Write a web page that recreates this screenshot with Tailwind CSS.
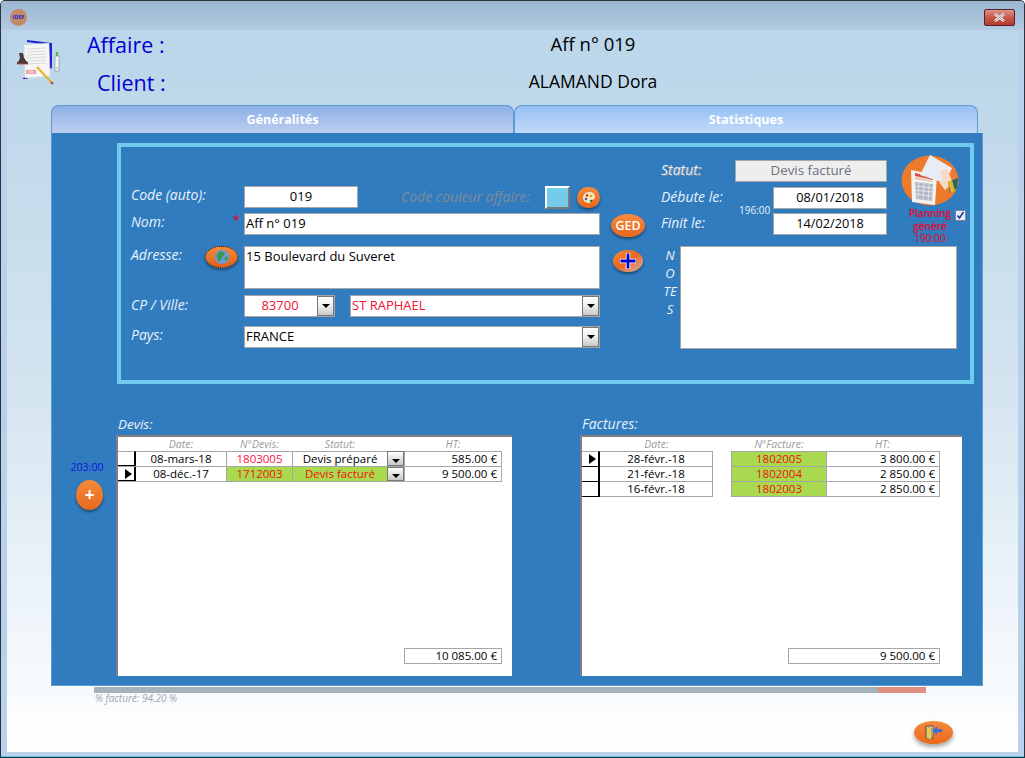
<!DOCTYPE html>
<html lang="fr">
<head>
    <meta charset="UTF-8">
    <title>Affaire</title>
    <script src="https://cdn.jsdelivr.net/npm/@tailwindcss/browser@4"></script>
</head>
<body class="bg-white">

<div class="relative w-[1025px] h-[758px] overflow-hidden flex flex-col font-['Open_Sans',sans-serif] bg-[#b9d1ea] border-t border-x border-[#2a333d] rounded-t-[5px]">

    <!-- Title bar -->
    <div class="h-[29px] shrink-0 flex items-center justify-between pl-[9px] pr-[9px] pt-[4px] bg-gradient-to-b from-[#9cb5d0] to-[#b2cbe1]">
        <div class="w-[17px] h-[17px] rounded-full bg-[#c08a64] flex items-center justify-center text-[5px] leading-none font-bold text-[#1a1ae0]">IDEP</div>
        <div class="w-[31px] h-[17px] rounded-[2px] border border-[#5a2030] bg-gradient-to-b from-[#dc9488] via-[#c8594a] to-[#b53a2a] flex items-center justify-center">
            <svg width="13" height="9" viewBox="0 0 13 9"><path d="M2 1l9 7M11 1L2 8" stroke="#ffffff" stroke-width="2.6" fill="none"/><path d="M2 1l9 7M11 1L2 8" stroke="#666f7a" stroke-width="0.8" fill="none"/></svg>
        </div>
    </div>

    <!-- Client area -->
    <div class="relative flex-1 mx-[6px] mb-[6px] flex flex-col bg-[linear-gradient(to_bottom,#bbd6ea_0%,#c0d9ea_14%,#d5e5f0_51%,#f3f8fc_86%,#ffffff_100%)]">

        <!-- Header -->
        <div class="h-[75px] shrink-0 flex">
            <div class="w-[45px] pl-[7px] pt-[9px] shrink-0">
                <svg width="46" height="50" viewBox="0 0 46 50">
                    <path d="M13 1l16 2 9 1v25l-3 1V6L13 3z" fill="#2222cc"/>
                    <path d="M9 39l3-1 2 2-5 0z" fill="#2222cc"/>
                    <path d="M10 6l25-2 1 33-25 2z" fill="#f5f5f5" stroke="#d8d8d8" stroke-width="0.5"/>
                    <path d="M13 10l19-1M13 13l19-1M13 16l19-1M13 19l19-1M13 22l19-1M13 25l19-1" stroke="#d4d4d4" stroke-width="0.8"/>
                    <rect x="12" y="31" width="10" height="4" fill="#f29aa6"/>
                    <path d="M14 33h6" stroke="#ffffff" stroke-width="0.8"/>
                    <path d="M23 28l14 15" stroke="#e6b52a" stroke-width="2.2"/>
                    <path d="M37 43l2 2" stroke="#c04030" stroke-width="2.2"/>
                    <path d="M3 23h11v2H3z" fill="#4a3a38"/>
                    <path d="M5 14h4l1 5 3 4H4l2-4z" fill="#4a3a38"/>
                    <path d="M3 25h11" stroke="#d04050" stroke-width="0.8"/>
                    <rect x="41" y="17" width="4" height="15" fill="#f4f6fa" stroke="#7a8aa0" stroke-width="0.6"/>
                    <path d="M43 13v4" stroke="#5a9a3a" stroke-width="1.6"/>
                    <path d="M43 28v2" stroke="#c8a030" stroke-width="1"/>
                </svg>
            </div>
            <div class="w-[35px] shrink-0"></div>
            <div class="flex flex-col w-[494px] shrink-0">
                <div class="h-[38px] pt-[1px] text-[21.5px] leading-[28px] text-[#0000d4]">Affaire :</div>
                <div class="h-[37px] pt-[1px] pl-[10px] text-[21.5px] leading-[28px] text-[#0000d4]">Client :</div>
            </div>
        </div>
        <div class="absolute left-[386px] top-[0px] w-[400px] flex flex-col items-center text-black leading-[25px]">
            <div class="h-[38px] pt-[1px] text-[18.5px]">Aff n° 019</div>
            <div class="h-[37px] pt-[1px] text-[17.5px]">ALAMAND Dora</div>
        </div>

        <!-- Tabs -->
        <div class="flex ml-[44px] w-[927px] h-[28px] shrink-0 text-[12.5px] font-bold text-white">
            <div class="w-[463px] flex items-center justify-center rounded-t-[8px] border border-b-0 border-[#5c9ad2] bg-gradient-to-b from-[#8db1e6] to-[#bccdf1] pt-[1px]">Généralités</div>
            <div class="w-[464px] flex items-center justify-center rounded-t-[8px] border border-b-0 border-[#5c9ad2] bg-gradient-to-b from-[#97c0f3] to-[#c2daf9] pt-[1px]">Statistiques</div>
        </div>

        <!-- Blue panel -->
        <div class="ml-[44px] w-[932px] h-[553px] shrink-0 bg-[#317bbf] border border-[#5a9bd4] border-t-0 flex flex-col">

            <!-- Form frame -->
            <div class="ml-[65px] mt-[10px] w-[857px] h-[241px] shrink-0 border-[4px] border-[#6fcbee] flex">

                <!-- Left fields -->
                <div class="w-[526px] shrink-0 pl-[10px] pt-[39px] flex flex-col text-[14px] text-[#e8f2fa] italic">
                    <div class="flex h-[22px]">
                        <div class="w-[113px] leading-[18px] whitespace-nowrap">Code (auto):</div>
                        <div class="w-[114px] border border-[#a6a6a6] bg-white not-italic text-black text-center text-[13px] leading-[19px]">019</div>
                        <div class="w-[187px] pl-[43px] text-[14px] leading-[21px] text-[#7f8c99] whitespace-nowrap">Code couleur affaire:</div>
                        <div class="w-[25px] h-[23px] bg-[#74cbea] border-2 border-t-white border-l-white border-r-[#7a7a7a] border-b-[#7a7a7a]"></div>
                        <div class="ml-[7px] mt-[1px] w-[23px] h-[21px] rounded-full bg-gradient-to-b from-[#f58a3c] to-[#e8681c] shadow-[0_2px_3px_rgba(0,0,0,0.4)] flex items-center justify-center">
                            <svg width="14" height="14" viewBox="0 0 14 14"><path d="M7 1c4 0 6 2 6 5s-2 2-3 3 0 3-3 3-6-2-6-5 2-6 6-6z" fill="#f3e6b8"/><circle cx="5" cy="4.500" r="1.200" fill="#d02020"/><circle cx="9" cy="5" r="1.200" fill="#e0a010"/><circle cx="4" cy="8" r="1.200" fill="#3050d0"/><circle cx="9" cy="10" r="1.200" fill="#208030"/></svg>
                        </div>
                    </div>
                    <div class="flex h-[22px] mt-[5px]">
                        <div class="relative w-[113px] leading-[18px]">Nom:
                            <span class="absolute left-[102px] top-[2px] not-italic font-bold text-[12px] text-[#c02040] leading-none">*</span>
                        </div>
                        <div class="w-[356px] border border-[#a6a6a6] bg-white not-italic text-black pl-[1px] text-[13px] leading-[19px]">Aff n° 019</div>
                        <div class="ml-[11px] mt-[1px] w-[34px] h-[23px] rounded-[50%] bg-gradient-to-b from-[#f58a3c] to-[#e8681c] shadow-[0_2px_3px_rgba(0,0,0,0.4)] not-italic font-semibold text-white text-[12.5px] leading-[23px] text-center">GED</div>
                    </div>
                    <div class="flex h-[43px] mt-[11px]">
                        <div class="w-[74px] leading-[18px]">Adresse:</div>
                        <div class="w-[39px]">
                            <div class="w-[33px] h-[22px] rounded-[50%] bg-gradient-to-b from-[#f58a3c] to-[#e0601a] border border-dotted border-[#222] shadow-[0_2px_3px_rgba(0,0,0,0.4)] flex items-center justify-center">
                                <svg width="14" height="14" viewBox="0 0 14 14"><circle cx="7" cy="7" r="7" fill="#6a9ad8"/><path d="M3 3c2-2 5-2 6 0s-1 3-2 4 0 3-2 4-2-2-3-3 0-4 1-5zM10 7c1-1 3 0 3 1s-2 3-3 3 0-3 0-4z" fill="#3a9a4a"/></svg>
                            </div>
                        </div>
                        <div class="w-[356px] border border-[#a6a6a6] bg-white not-italic text-black pl-[1px] text-[13px] leading-[18px]">15 Boulevard du Suveret</div>
                        <div class="ml-[13px] mt-[4px] w-[30px] h-[22px] rounded-[50%] bg-gradient-to-br from-[#f58a3c] via-[#e8681c] to-[#d8b0a0] shadow-[0_2px_3px_rgba(0,0,0,0.4)] flex items-center justify-center">
                            <svg width="18" height="18" viewBox="0 0 18 18"><path d="M9 1v16M1 9h16" stroke="#ffffff" stroke-width="4.500"/><path d="M9 1.500v15M1.500 9h15" stroke="#0000d0" stroke-width="2.800"/></svg>
                        </div>
                    </div>
                    <div class="flex h-[22px] mt-[6px]">
                        <div class="w-[113px] leading-[20px]">CP / Ville:</div>
                        <div class="w-[91px] border border-[#a6a6a6] bg-white not-italic text-[#f01030] flex text-[13px] leading-[19px]">
                            <div class="flex-1 text-center pr-[2px]">83700</div>
                            <div class="w-[17px] h-[20px] border border-[#777] bg-gradient-to-b from-white via-[#eeeeee] to-[#c8c8c8] flex items-center justify-center">
                                <div class="w-0 h-0 border-x-[4px] border-x-transparent border-t-[4px] border-t-black"></div>
                            </div>
                        </div>
                        <div class="ml-[15px] w-[250px] border border-[#a6a6a6] bg-white not-italic text-[#f01030] flex justify-between pl-[1px] text-[13px] leading-[19px]">
                            <div>ST RAPHAEL</div>
                            <div class="w-[17px] h-[20px] border border-[#777] bg-gradient-to-b from-white via-[#eeeeee] to-[#c8c8c8] flex items-center justify-center">
                                <div class="w-0 h-0 border-x-[4px] border-x-transparent border-t-[4px] border-t-black"></div>
                            </div>
                        </div>
                    </div>
                    <div class="flex h-[22px] mt-[9px]">
                        <div class="w-[113px] leading-[18px]">Pays:</div>
                        <div class="w-[356px] border border-[#a6a6a6] bg-white not-italic text-black flex justify-between pl-[1px] text-[13px] leading-[19px]">
                            <div>FRANCE</div>
                            <div class="w-[17px] h-[20px] border border-[#777] bg-gradient-to-b from-white via-[#eeeeee] to-[#c8c8c8] flex items-center justify-center">
                                <div class="w-0 h-0 border-x-[4px] border-x-transparent border-t-[4px] border-t-black"></div>
                            </div>
                        </div>
                    </div>
                </div>

                <!-- Right fields -->
                <div class="relative flex-1 pl-[14px] pt-[13px] flex flex-col text-[14px] text-[#e8f2fa] italic">
                    <div class="flex h-[22px]">
                        <div class="w-[74px] leading-[20px] text-[#e8eef4] [text-shadow:1px_1px_0_#7f8c99]">Statut:</div>
                        <div class="w-[152px] border border-[#a6a6a6] bg-[#eeeeee] not-italic text-[#6b7280] text-center text-[13.3px] leading-[19px]">Devis facturé</div>
                    </div>
                    <div class="flex h-[22px] mt-[5px]">
                        <div class="w-[112px] leading-[20px]">Débute le:</div>
                        <div class="w-[114px] border border-[#a6a6a6] bg-white not-italic text-black text-center text-[12.75px] leading-[19px]">08/01/2018</div>
                    </div>
                    <div class="relative flex h-[22px] mt-[4px]">
                        <div class="w-[112px] leading-[20px]">Finit le:</div>
                        <div class="w-[114px] border border-[#a6a6a6] bg-white not-italic text-black text-center text-[12.75px] leading-[19px]">14/02/2018</div>
                        <div class="absolute left-[78px] top-[-10px] not-italic text-[10px] leading-[14px]">196:00</div>
                    </div>
                    <div class="flex h-[103px] mt-[11px]">
                        <div class="w-[18px] text-center text-[13px] leading-[18px] break-all">N O TE S</div>
                        <div class="ml-[1px] w-[277px] border border-[#a6a6a6] bg-white"></div>
                    </div>

                    <!-- Planning -->
                    <div class="absolute left-[250px] top-[8px] w-[66px] flex flex-col items-center not-italic">
                        <svg width="58" height="51" viewBox="0 0 58 51">
                            <ellipse cx="29" cy="25.500" rx="28.500" ry="25" fill="#ee7a2c"/>
                            <path d="M10 15l26 5-2 30-23-3z" fill="#f2f2f2"/>
                            <path d="M14 18l18 4v3l-18-4z" fill="#d85040"/>
                            <path d="M14 22l18 4v1l-18-3z" fill="#e8c0a0"/>
                            <path d="M14 27l18 2-1 17-16-2z" fill="#b4b8c6"/>
                            <path d="M14 31l18 2M14 35l18 2M14 39l17 2M18 28l-1 16M23 28l-1 17M28 29l-1 17" stroke="#f2f2f2" stroke-width="0.7"/>
                            <path d="M29 0l22 13-7 15-25-8z" fill="#e8ecf4"/>
                            <path d="M39 15l7-1 6 14-8 7-6-8 3-1z" fill="#f6dcc4"/>
                            <path d="M47 27l10-4-1 10-7 5z" fill="#1f6a60"/>
                            <path d="M47 27l4-2 3 11-4 2z" fill="#e6b52a"/>
                        </svg>
                        <div class="relative w-full text-center text-[10px] leading-[12.5px] text-[#e0103a] mt-[1px] font-semibold [text-shadow:0_0_1px_rgba(120,60,100,0.5)]">
                            <div>Planning</div>
                            <div>généré</div>
                            <div class="font-normal">190:00</div>
                            <div class="absolute right-[-3px] top-[3px] w-[11px] h-[11px] bg-[#e6ecf8] border border-[#7a8698] flex items-center justify-center">
                                <svg width="9" height="9" viewBox="0 0 9 9"><path d="M1.500 4.500l2 2.500 4-6" stroke="#2030a0" stroke-width="1.500" fill="none"/></svg>
                            </div>
                        </div>
                    </div>
                </div>
            </div>

            <!-- Lists -->
            <div class="flex mt-[30px]">
                <!-- Add button column -->
                <div class="w-[64px] shrink-0 pt-[46px] flex flex-col items-center">
                    <div class="ml-[6px] text-[10.5px] leading-[14px] text-[#1414dc]">203:00</div>
                    <div class="ml-[11px] mt-[6px] w-[27px] h-[30px] rounded-[50%] bg-gradient-to-b from-[#f58a3c] to-[#e8681c] shadow-[0_2px_3px_rgba(0,0,0,0.4)] text-white font-bold text-[17px] leading-[29px] text-center">+</div>
                </div>

                <!-- Devis -->
                <div class="w-[396px] shrink-0 flex flex-col">
                    <div class="h-[21px] pl-[2px] italic text-[13.5px] leading-[20px] text-[#e8f2fa]">Devis:</div>
                    <div class="h-[241px] bg-white border-t-2 border-l-2 border-t-[#808080] border-l-[#808080] flex flex-col text-[11.5px] leading-[14px] text-black">
                        <div class="flex h-[14px] italic text-[10.5px] text-[#9a9a9a] text-center">
                            <div class="w-[18px]"></div><div class="w-[90px]">Date:</div><div class="w-[67px]">N°Devis:</div><div class="w-[94px]">Statut:</div><div class="w-[17px]"></div><div class="w-[98px]">HT:</div>
                        </div>
                        <div class="flex h-[16px] w-[384px] border-b border-[#a6a6a6]">
                            <div class="w-[18px] border-r-2 border-black border-t border-t-[#a6a6a6] border-b border-b-black"></div>
                            <div class="w-[90px] text-center border-t border-[#a6a6a6]">08-mars-18</div>
                            <div class="w-[67px] text-center border border-b-0 border-[#a6a6a6] text-[#ff1040]">1803005</div>
                            <div class="w-[94px] border-t border-[#a6a6a6] text-center">Devis préparé</div>
                            <div class="w-[17px] h-[15px] border border-[#777] bg-gradient-to-b from-white to-[#c8c8c8] flex items-end justify-center pb-[2px]">
                                <div class="w-0 h-0 border-x-[4px] border-x-transparent border-t-[4px] border-t-black"></div>
                            </div>
                            <div class="w-[98px] text-right pr-[4px] border border-b-0 border-[#a6a6a6]">585.00 €</div>
                        </div>
                        <div class="flex h-[15px] w-[384px] border-b border-[#a6a6a6]">
                            <div class="w-[18px] border-r-2 border-black border-b border-b-black flex items-center pl-[7px]">
                                <div class="w-0 h-0 border-y-[5px] border-y-transparent border-l-[7px] border-l-black"></div>
                            </div>
                            <div class="w-[90px] text-center">08-déc.-17</div>
                            <div class="w-[67px] text-center border-x border-[#a6a6a6] bg-[#a8d94f] text-[#f01010]">1712003</div>
                            <div class="w-[94px] bg-[#a8d94f] text-[#f01010] text-center">Devis facturé</div>
                            <div class="w-[17px] h-[14px] border border-[#777] bg-gradient-to-b from-white to-[#c8c8c8] flex items-end justify-center pb-[2px]">
                                <div class="w-0 h-0 border-x-[4px] border-x-transparent border-t-[4px] border-t-black"></div>
                            </div>
                            <div class="w-[98px] text-right pr-[4px] border-x border-[#a6a6a6]">9 500.00 €</div>
                        </div>
                        <div class="flex-1 flex items-end pb-[12px] pl-[286px]">
                            <div class="w-[98px] h-[16px] border border-[#a6a6a6] text-right pr-[4px]">10 085.00 €</div>
                        </div>
                    </div>
                </div>

                <div class="w-[68px] shrink-0"></div>

                <!-- Factures -->
                <div class="w-[382px] shrink-0 flex flex-col">
                    <div class="h-[21px] pl-[2px] italic text-[14px] leading-[20px] text-[#e8f2fa]">Factures:</div>
                    <div class="h-[241px] bg-white border-t-2 border-l-2 border-t-[#808080] border-l-[#808080] flex flex-col text-[11.5px] leading-[14px] text-black">
                        <div class="flex h-[14px] italic text-[10.5px] text-[#9a9a9a] text-center">
                            <div class="w-[18px]"></div><div class="w-[113px]">Date:</div><div class="w-[18px]"></div><div class="w-[96px]">N°Facture:</div><div class="w-[113px] pr-[2px]">HT:</div>
                        </div>
                        <div class="flex h-[16px]">
                            <div class="w-[18px] border-r-2 border-black border-t border-t-[#a6a6a6] border-b border-b-black flex items-center pl-[7px]">
                                <div class="w-0 h-0 border-y-[5px] border-y-transparent border-l-[7px] border-l-black"></div>
                            </div>
                            <div class="w-[113px] text-center border border-l-0 border-[#a6a6a6]">28-févr.-18</div>
                            <div class="w-[18px]"></div>
                            <div class="w-[96px] text-center border border-[#a6a6a6] bg-[#a8d94f] text-[#f01010]">1802005</div>
                            <div class="w-[113px] text-right pr-[4px] border border-l-0 border-[#a6a6a6]">3 800.00 €</div>
                        </div>
                        <div class="flex h-[15px]">
                            <div class="w-[18px] border-r-2 border-black border-b border-b-black"></div>
                            <div class="w-[113px] text-center border-r border-b border-[#a6a6a6]">21-févr.-18</div>
                            <div class="w-[18px]"></div>
                            <div class="w-[96px] text-center border-x border-b border-[#a6a6a6] bg-[#a8d94f] text-[#f01010]">1802004</div>
                            <div class="w-[113px] text-right pr-[4px] border-r border-b border-[#a6a6a6]">2 850.00 €</div>
                        </div>
                        <div class="flex h-[15px]">
                            <div class="w-[18px] border-r-2 border-black border-b border-b-black"></div>
                            <div class="w-[113px] text-center border-r border-b border-[#a6a6a6]">16-févr.-18</div>
                            <div class="w-[18px]"></div>
                            <div class="w-[96px] text-center border-x border-b border-[#a6a6a6] bg-[#a8d94f] text-[#f01010]">1802003</div>
                            <div class="w-[113px] text-right pr-[4px] border-r border-b border-[#a6a6a6]">2 850.00 €</div>
                        </div>
                        <div class="flex-1 flex items-end pb-[12px] pl-[206px]">
                            <div class="w-[152px] h-[16px] border border-[#a6a6a6] text-right pr-[4px]">9 500.00 €</div>
                        </div>
                    </div>
                </div>
            </div>
        </div>

        <!-- Progress -->
        <div class="ml-[87px] mt-[1px] w-[832px] h-[6px] shrink-0 flex">
            <div class="w-[784px] bg-[#a4b3b9]"></div>
            <div class="flex-1 bg-[#e28f80]"></div>
        </div>
        <div class="ml-[88px] text-[10px] leading-[11px] italic text-[#a0a6ae]">% facturé: 94.20 %</div>

        <!-- Exit button -->
        <div class="absolute left-[907px] top-[691px] w-[39px] h-[23px] rounded-[50%] bg-gradient-to-b from-[#f58a3c] to-[#e8681c] shadow-[0_3px_4px_rgba(0,0,0,0.35)] flex items-center justify-center">
            <svg width="18" height="16" viewBox="0 0 18 16">
                <path d="M1 1h7v12H1z" fill="#f8f4e4" stroke="#333" stroke-width="0.8"/>
                <path d="M1.500 1l5 2v12l-5-2z" fill="#e8c860" stroke="#806020" stroke-width="0.5"/>
                <path d="M17 4h-5V1L7.500 5.500 12 10V7h5z" fill="#3a6ee0"/>
            </svg>
        </div>
    </div>

    <div class="absolute bottom-[1px] left-0 right-0 h-[1px] bg-[#5cc4e0]"></div>
    <div class="absolute bottom-0 left-0 right-0 h-[1px] bg-[#1a3a4a]"></div>
</div>

</body>
</html>
